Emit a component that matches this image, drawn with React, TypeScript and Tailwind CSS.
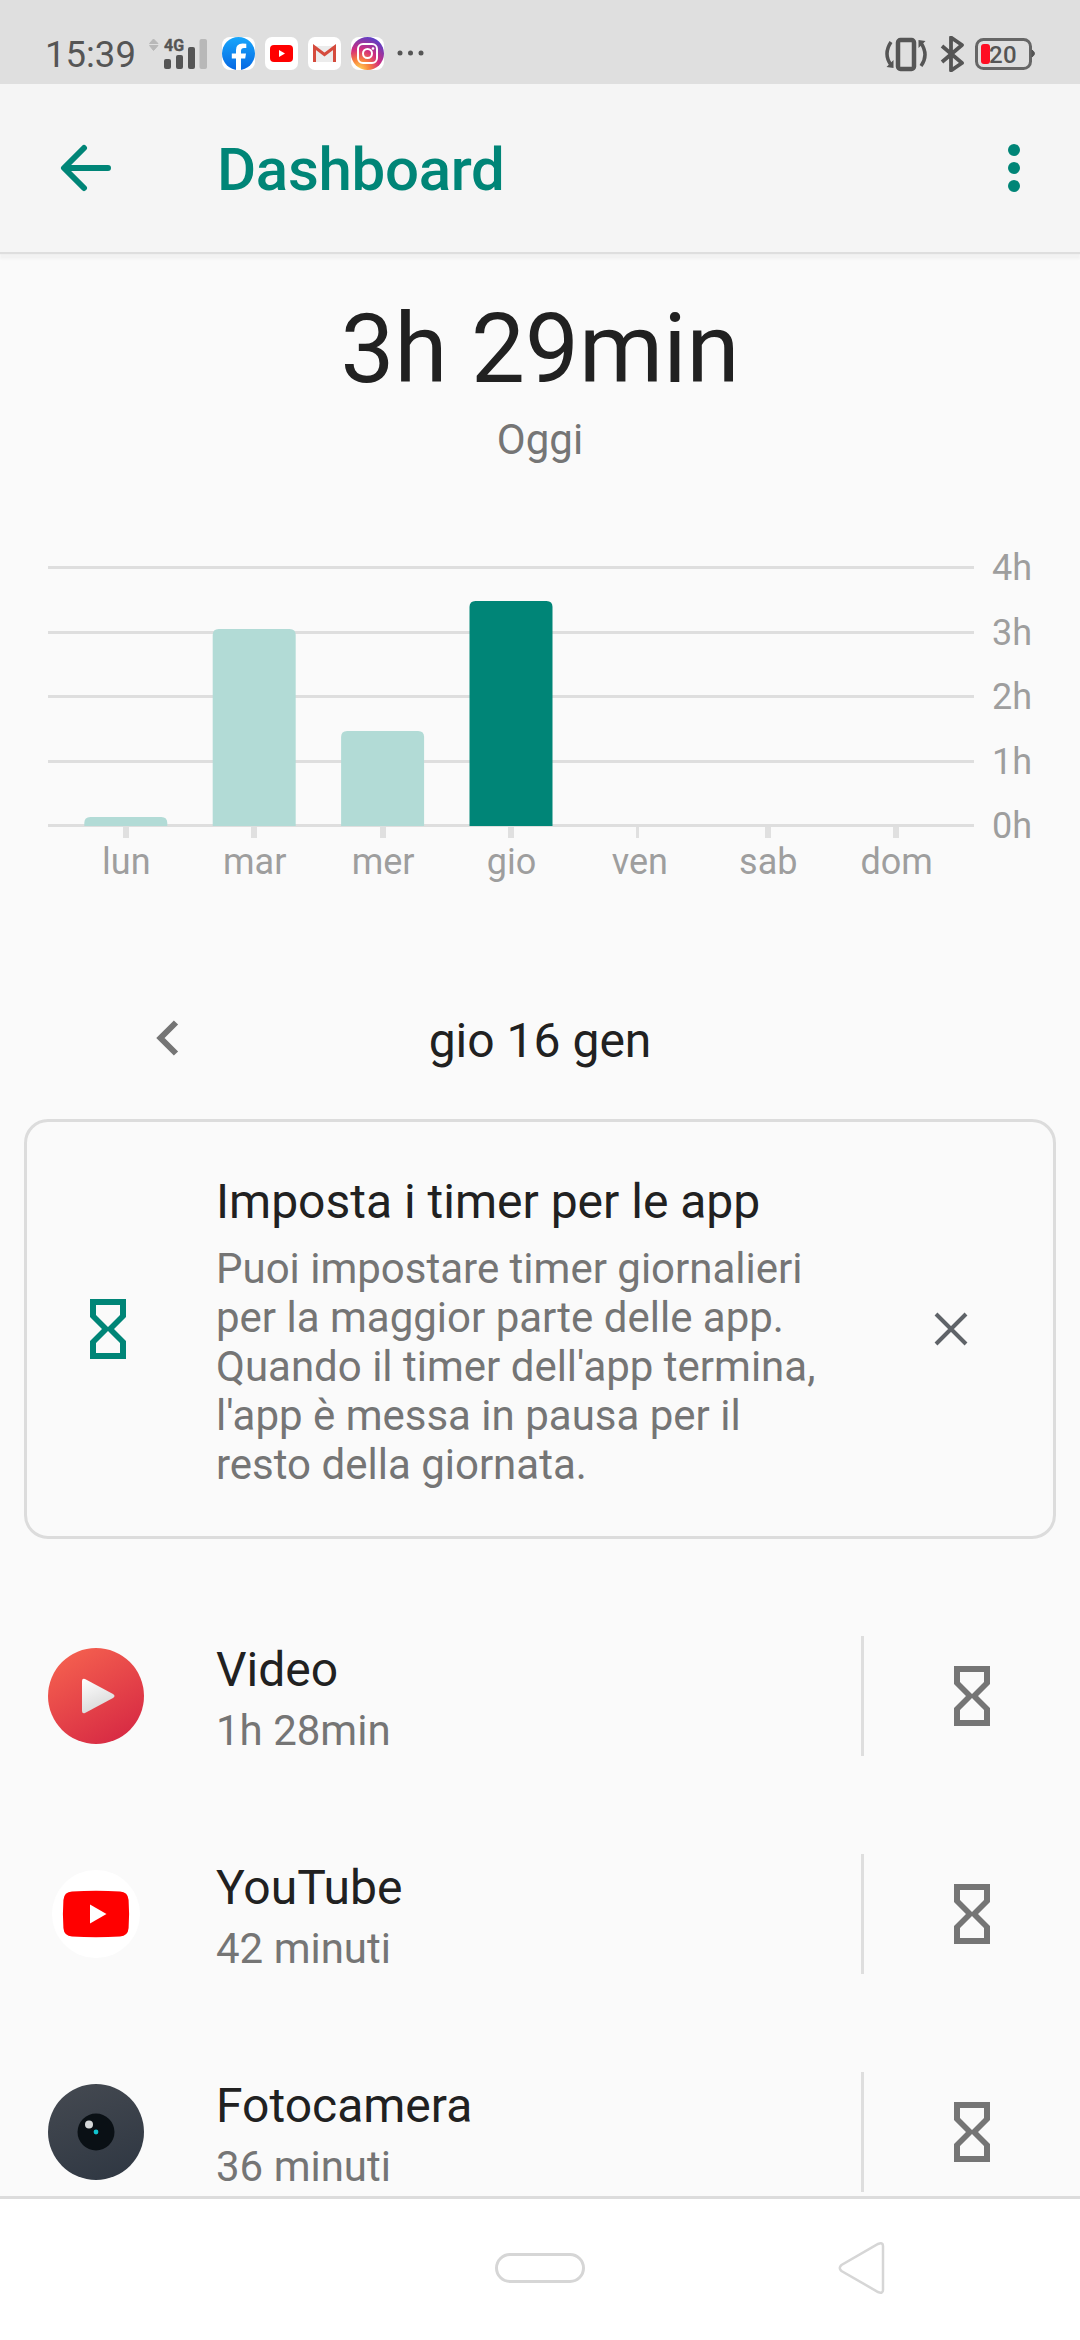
import React from "react";

interface AppUsage {
  name: string;
  time: string;
  icon: React.ReactNode;
}

interface DayBar {
  label: string;
  height: number;
  active?: boolean;
}

const days: DayBar[] = [
  { label: "lun", height: 9 },
  { label: "mar", height: 197 },
  { label: "mer", height: 95 },
  { label: "gio", height: 225, active: true },
  { label: "ven", height: 0 },
  { label: "sab", height: 0 },
  { label: "dom", height: 0 },
];

const gridLines = [
  { label: "4h", y: 26 },
  { label: "3h", y: 91 },
  { label: "2h", y: 155 },
  { label: "1h", y: 220 },
  { label: "0h", y: 284 },
];

const Hourglass = ({ className }: { className: string }) => (
  <svg className={className} width="36" height="60" viewBox="0 0 36 60" fill="currentColor">
    <path
      fillRule="evenodd"
      d="M0 0H36V18L24 30L36 42V60H0V42L12 30L0 18ZM6 6V16L18 28L30 16V6ZM18 32L6 44V54H30V44Z"
    />
  </svg>
);

const VideoIcon = () => (
  <svg width="96" height="96" viewBox="0 0 96 96">
    <defs>
      <linearGradient id="video" x1="0.2" y1="0" x2="0.8" y2="1">
        <stop offset="0" stopColor="#f5614f" />
        <stop offset="1" stopColor="#d62843" />
      </linearGradient>
      <linearGradient id="play" x1="0" y1="0" x2="0.4" y2="1">
        <stop offset="0" stopColor="#ffffff" />
        <stop offset="1" stopColor="#d9d9d9" />
      </linearGradient>
    </defs>
    <circle cx="48" cy="48" r="48" fill="url(#video)" />
    <path
      d="M34 33Q34 30 37 31L65 46Q68 48 65 50L37 65Q34 66 34 63Z"
      fill="url(#play)"
    />
  </svg>
);

const YouTubeIcon = () => (
  <svg width="96" height="96" viewBox="0 0 96 96">
    <circle cx="48" cy="48" r="44" fill="#fff" />
    <path
      d="M24 25.6Q48 24 72 25.6Q80 26 80.6 34Q81.6 48 80.6 62Q80 70 72 70.4Q48 72 24 70.4Q16 70 15.4 62Q14.4 48 15.4 34Q16 26 24 25.6Z"
      fill="#f00"
    />
    <path d="M42 38.5L58.5 48L42 57.5Z" fill="#fff" />
  </svg>
);

const CameraIcon = () => (
  <svg width="96" height="96" viewBox="0 0 96 96">
    <defs>
      <linearGradient id="camera" x1="0.3" y1="0" x2="0.7" y2="1">
        <stop offset="0" stopColor="#434850" />
        <stop offset="1" stopColor="#303843" />
      </linearGradient>
    </defs>
    <circle cx="48" cy="48" r="48" fill="url(#camera)" />
    <circle cx="48" cy="48" r="18.5" fill="#0a1015" />
    <circle cx="41" cy="40.5" r="4" fill="#d5d8d9" />
    <circle cx="48" cy="48" r="2.4" fill="#10c4cf" />
  </svg>
);

const apps: AppUsage[] = [
  { name: "Video", time: "1h 28min", icon: <VideoIcon /> },
  { name: "YouTube", time: "42 minuti", icon: <YouTubeIcon /> },
  { name: "Fotocamera", time: "36 minuti", icon: <CameraIcon /> },
];

const SignalIcon = () => (
  <svg className="ml-[14px]" width="60" height="34" viewBox="0 0 60 34">
    <path d="M0.5 7.5L4.5 3L9 7.5ZM0.5 9.5H9L4.5 14.500Z" fill="#b8b8b8" stroke="#b8b8b8" strokeLinejoin="round" />
    <text
      x="15"
      y="15"
      fontSize="17"
      fontWeight="700"
      fill="#555"
      stroke="#555"
      strokeWidth="0.4"
      textLength="20"
      lengthAdjust="spacingAndGlyphs"
    >
      4G
    </text>
    <rect x="15" y="23" width="7" height="10" rx="2" fill="#555" />
    <rect x="27" y="19" width="7" height="14" rx="2" fill="#555" />
    <rect x="39" y="11" width="7" height="22" rx="2" fill="#555" />
    <rect x="50.5" y="3" width="7.5" height="30" rx="2" fill="#b8b8b8" />
  </svg>
);

const NotificationIcons = () => (
  <div className="ml-[13px] flex items-center gap-[10px]">
    <svg width="33" height="33" viewBox="0 0 33 33">
      <defs>
        <linearGradient id="fb" x1="0" y1="0" x2="0" y2="1">
          <stop offset="0" stopColor="#18a6fb" />
          <stop offset="1" stopColor="#0668e3" />
        </linearGradient>
      </defs>
      <rect width="33" height="33" rx="8" fill="#fff" />
      <circle cx="16.5" cy="16.5" r="16.5" fill="url(#fb)" />
      <path
        d="M14 33V21.5H9.8V16.500H14V13Q14 6.5 20.5 6.5Q23 6.5 24.3 6.8V11H22Q19 11 19 14V16.500H24L23.2 21.5H19V33Z"
        fill="#fff"
      />
    </svg>
    <svg width="33" height="33" viewBox="0 0 33 33">
      <rect width="33" height="33" rx="7" fill="#fff" />
      <rect x="5" y="8" width="23" height="17" rx="4" fill="#f00" />
      <path d="M14 13L20 16.5L14 20Z" fill="#fff" />
    </svg>
    <svg width="33" height="33" viewBox="0 0 33 33">
      <rect width="33" height="33" rx="7" fill="#fff" />
      <path d="M6 9H27V25H6Z" fill="#ececec" />
      <path d="M6.5 25V10L16.5 17.5L26.5 10V25" fill="none" stroke="#d54b3d" strokeWidth="3" />
    </svg>
    <svg width="33" height="33" viewBox="0 0 33 33">
      <defs>
        <radialGradient id="ig" cx="0.25" cy="1" r="1.05">
          <stop offset="0" stopColor="#ffd75a" />
          <stop offset="0.3" stopColor="#f9813c" />
          <stop offset="0.6" stopColor="#d32c7d" />
          <stop offset="1" stopColor="#5b3fc6" />
        </radialGradient>
      </defs>
      <rect width="33" height="33" rx="8" fill="#fff" />
      <circle cx="16.5" cy="16.5" r="16.5" fill="url(#ig)" />
      <g fill="none" stroke="#fff" strokeWidth="2">
        <rect x="7" y="7" width="19" height="19" rx="5" />
        <circle cx="16.5" cy="16.5" r="4.5" />
      </g>
      <circle cx="22" cy="11.5" r="1.3" fill="#fff" />
    </svg>
  </div>
);

const StatusBar = () => (
  <div className="flex h-[84px] items-start justify-between bg-[#dfdfdf] pl-[45px] pr-[44px] pt-[36px] text-[#555]">
    <div className="flex h-[34px] items-center">
      <span className="w-[90px] whitespace-nowrap pt-[4px] text-[36.5px] font-[450] leading-[34px]">15:39</span>
      <SignalIcon />
      <NotificationIcons />
      <svg className="ml-[13px]" width="28" height="6" viewBox="0 0 28 6" fill="#555">
        <circle cx="3" cy="3" r="2.5" />
        <circle cx="13.5" cy="3" r="2.5" />
        <circle cx="24" cy="3" r="2.5" />
      </svg>
    </div>
    <svg width="152" height="36" viewBox="0 0 152 36" fill="none" stroke="#555">
      <rect x="14" y="4" width="16" height="29" rx="2.5" strokeWidth="4.5" />
      <path d="M7 6Q-1 18 7 29M37 7Q45 19 37 30" strokeWidth="3.5" />
      <path d="M2.500 31L9.5 24V32ZM34.5 4V12L41.5 5Z" fill="#555" stroke="none" />
      <path d="M58 10L78 27L67 34.500V1.500L78 9L58 26" strokeWidth="3.8" strokeLinejoin="round" />
      <rect x="92.5" y="3.5" width="54" height="29" rx="7" strokeWidth="3" stroke="#666" />
      <path d="M148 14Q153 17.500 148 21Z" fill="#555" />
      <rect x="97" y="8" width="9" height="20" rx="3" fill="#ff0d22" stroke="none" />
      <text x="105" y="26.5" fontSize="24" fontWeight="500" fill="#555" stroke="none" letterSpacing="0.3">
        20
      </text>
    </svg>
  </div>
);

const Header = () => (
  <header className="flex h-[168px] items-center bg-[#f5f5f5] pl-[59px] pr-[60px] text-[#008577] shadow-[0_2px_1px_#dedede,0_7px_2px_#f2f2f2]">
    <svg width="54" height="48" viewBox="0 0 54 48" fill="none" stroke="currentColor" strokeWidth="6" strokeLinecap="round" strokeLinejoin="round">
      <path d="M49 24H6M25 4L5 24L25 44" />
    </svg>
    <h1 className="ml-[104px] mt-[4px] flex-1 text-[60px] font-medium leading-[72px] tracking-[-0.3px]">Dashboard</h1>
    <svg width="12" height="48" viewBox="0 0 12 48" fill="currentColor">
      <circle cx="6" cy="6" r="6" />
      <circle cx="6" cy="24" r="6" />
      <circle cx="6" cy="42" r="6" />
    </svg>
  </header>
);

const WeekChart = () => (
  <svg className="mt-[76px]" width="1080" height="360" viewBox="0 0 1080 360" fontSize="36" fill="#9e9e9e">
    {gridLines.map((line) => (
      <g key={line.label}>
        <rect x="48" y={line.y} width="926" height="3" fill="#dedede" />
        <text x="992" y={line.y + 14}>
          {line.label}
        </text>
      </g>
    ))}
    {days.map((day, i) => {
      const center = 125.8 + i * 128.4;
      const top = 286 - day.height;
      return (
        <g key={day.label}>
          <rect x={Math.round(center) - 3} y="287" width={day.label === "ven" ? 3 : 6} height="11" fill="#e0e0e0" />
          {day.height > 0 && (
            <path
              d={`M${center - 41.5} 286V${top + 6}q0 -6 6 -6h71q6 0 6 6V286Z`}
              fill={day.active ? "#008577" : "#b2dbd6"}
            />
          )}
          <text x={center + 0.5} y="333.5" textAnchor="middle">
            {day.label}
          </text>
        </g>
      );
    })}
  </svg>
);

const TimerCard = () => (
  <div className="mx-[24px] mt-[51px] flex h-[420px] items-center rounded-[24px] border-[3px] border-[#dcdcdc] pl-[63px] pr-[85px]">
    <Hourglass className="text-[#008577]" />
    <div className="ml-[90px] flex-1 pt-[4px]">
      <h2 className="text-[48px] leading-[56px] text-[#212121]">Imposta i timer per le app</h2>
      <p className="mt-[14px] w-[620px] text-[42px] leading-[49px] text-[#757575]">
        Puoi impostare timer giornalieri
        <br />
        per la maggior parte delle app.
        <br />
        Quando il timer dell'app termina,
        <br />
        l'app è messa in pausa per il
        <br />
        resto della giornata.
      </p>
    </div>
    <svg width="34" height="34" viewBox="0 0 34 34" stroke="#5f6368" strokeWidth="4">
      <path d="M2 2L32 32M32 2L2 32" />
    </svg>
  </div>
);

const AppRow = ({ app }: { app: AppUsage }) => (
  <li className="flex h-[218px] items-center pl-[48px] pr-[90px]">
    {app.icon}
    <div className="ml-[72px] flex-1 pt-[6px]">
      <div className="text-[48px] leading-[56px] text-[#212121]">{app.name}</div>
      <div className="mt-[8px] text-[42px] leading-[50px] text-[#757575]">{app.time}</div>
    </div>
    <div className="mr-[90px] h-[120px] w-[3px] bg-[#dedede]" />
    <Hourglass className="text-[#757575]" />
  </li>
);

const NavBar = () => (
  <nav className="flex h-[144px] items-start border-t-[3px] border-[#dcdcdc] bg-white pl-[495px]">
    <div className="mt-[54px] h-[30px] w-[90px] rounded-[15px] border-[3px] border-[#d6d6d6]" />
    <svg className="ml-[253px] mt-[42px]" width="48" height="54" viewBox="0 0 48 54" fill="none" stroke="#d6d6d6" strokeWidth="2.5">
      <path d="M3.5 24Q0 27 3.5 30L40 51Q45 53 45 49V5Q45 1 40 3Z" />
    </svg>
  </nav>
);

export default function App() {
  return (
    <div className="flex h-[2340px] w-[1080px] flex-col overflow-hidden bg-[#fafafa] font-['Roboto',sans-serif]">
      <StatusBar />
      <Header />
      <main className="h-[1944px] overflow-hidden pt-[49px]">
        <div className="text-center text-[96px] leading-[96px] text-[#212121]">3h 29min</div>
        <div className="mt-[19px] text-center text-[42px] leading-[48px] text-[#757575]">Oggi</div>
        <WeekChart />
        <div className="mt-[112px] grid h-[56px] grid-cols-3 items-center">
          <svg className="mb-[6px] ml-[156px]" width="24" height="36" viewBox="0 0 24 36" fill="none" stroke="#757575" strokeWidth="6">
            <path d="M20 2.5L4.5 18L20 33.5" />
          </svg>
          <span className="pt-[1px] text-center text-[48px] leading-[56px] text-[#212121]">gio 16 gen</span>
        </div>
        <TimerCard />
        <ul className="mt-[48px]">
          {apps.map((app) => (
            <AppRow key={app.name} app={app} />
          ))}
        </ul>
      </main>
      <NavBar />
    </div>
  );
}
